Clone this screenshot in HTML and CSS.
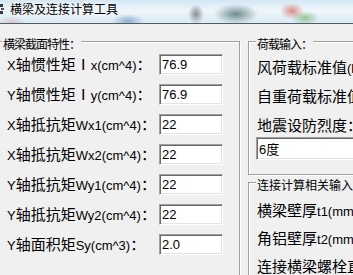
FILE: index.html
```html
<!DOCTYPE html>
<html>
<head>
    <meta charset="utf-8">
    <link rel="stylesheet" href="styles.css">
</head>
<body>
    <div id="titlebar">
        <svg class="app-icon" width="16" height="16" viewBox="0 0 16 16">
            <rect x="11" y="2" width="3" height="3" fill="#3a3a3a"/>
            <rect x="12" y="6" width="3" height="2" fill="#555"/>
            <rect x="11" y="9" width="3" height="3" fill="#3a3a3a"/>
        </svg>
        <span class="title">横梁及连接计算工具</span>
    </div>

    <div id="main">
        <div class="group section-group">
            <div class="group-title">横梁截面特性：</div>
            <div class="rows">
                <div class="row">
                    <span class="label">X<span class="zh">轴惯性矩Ⅰ</span>x(cm^4)<span class="zh">：</span></span>
                    <input class="field" type="text" value="76.9">
                </div>
                <div class="row">
                    <span class="label">Y<span class="zh">轴惯性矩Ⅰ</span>y(cm^4)<span class="zh">：</span></span>
                    <input class="field" type="text" value="76.9">
                </div>
                <div class="row">
                    <span class="label">X<span class="zh">轴抵抗矩</span>Wx1(cm^4)<span class="zh">：</span></span>
                    <input class="field" type="text" value="22">
                </div>
                <div class="row">
                    <span class="label">X<span class="zh">轴抵抗矩</span>Wx2(cm^4)<span class="zh">：</span></span>
                    <input class="field" type="text" value="22">
                </div>
                <div class="row">
                    <span class="label">Y<span class="zh">轴抵抗矩</span>Wy1(cm^4)<span class="zh">：</span></span>
                    <input class="field" type="text" value="22">
                </div>
                <div class="row">
                    <span class="label">Y<span class="zh">轴抵抗矩</span>Wy2(cm^4)<span class="zh">：</span></span>
                    <input class="field" type="text" value="22">
                </div>
                <div class="row">
                    <span class="label">Y<span class="zh">轴面积矩</span>Sy(cm^3)<span class="zh">：</span></span>
                    <input class="field" type="text" value="2.0">
                </div>
            </div>
        </div>

        <div class="side">
            <div class="group load-group">
                <div class="group-title">荷载输入：</div>
                <div class="lines">
                    <div class="line"><span class="zh">风荷载标准值</span>(kN/m^2)<span class="zh">：</span></div>
                    <div class="line"><span class="zh">自重荷载标准值</span>(kN/m)<span class="zh">：</span></div>
                    <div class="line"><span class="zh">地震设防烈度：</span></div>
                </div>
                <input class="field wide" type="text" value="6度">
            </div>

            <div class="group conn-group">
                <div class="group-title">连接计算相关输入：</div>
                <div class="lines">
                    <div class="line"><span class="zh">横梁壁厚</span>t1(mm)<span class="zh">：</span></div>
                    <div class="line"><span class="zh">角铝壁厚</span>t2(mm)<span class="zh">：</span></div>
                    <div class="line"><span class="zh">连接横梁螺栓直径</span>(mm)<span class="zh">：</span></div>
                </div>
            </div>
        </div>
    </div>
</body>
</html>
```

FILE: styles.css
```css
/* Dialog look */
:root {
    --face: #f0f0f0;
    --etch-dark: #a0a0a0;
    --etch-light: #ffffff;
}

body {
    margin: 0;
    background: var(--face);
    font-family: "Liberation Sans", "Noto Sans CJK SC", sans-serif;
    font-size: 13px;
    color: #000;
    overflow: hidden;
}

.zh {
    font-family: "Noto Sans CJK SC", sans-serif;
    font-size: 15px;
}

/* Aero glass title bar, blurred desktop icons behind it */
#titlebar {
    height: 24px;
    display: flex;
    align-items: flex-start;
    padding-top: 2px;
    box-sizing: border-box;
    border-bottom: 1px solid #4f5d6b;
    background:
        radial-gradient(16px 7px at 128px 21px, rgba(80, 125, 175, 0.55), transparent),
        radial-gradient(8px 10px at 196px 14px, rgba(70, 78, 88, 0.6), transparent),
        radial-gradient(22px 10px at 236px 14px, rgba(45, 85, 85, 0.65), transparent),
        radial-gradient(12px 8px at 292px 11px, rgba(205, 70, 60, 0.6), transparent),
        radial-gradient(14px 7px at 305px 18px, rgba(90, 160, 70, 0.55), transparent),
        radial-gradient(14px 6px at 12px 22px, rgba(210, 140, 150, 0.4), transparent),
        linear-gradient(#d3e7f3, #eef6fb 45%, #d9e9f4);
}

.app-icon {
    margin-left: -11px;
    flex: 0 0 auto;
}

.title {
    margin-left: 5px;
    font-family: "Noto Sans CJK SC", sans-serif;
    font-size: 12px;
    line-height: 14px;
    text-shadow: 0 0 6px #fff, 0 0 3px #fff;
}

#main {
    display: flex;
    gap: 8px;
    padding-top: 17px;
}

/* Etched group boxes */
.group {
    border: 1px solid var(--etch-dark);
    box-shadow: inset 1px 1px 0 var(--etch-light), 1px 1px 0 var(--etch-light);
    box-sizing: border-box;
    flex-shrink: 0;
}

.group-title {
    width: max-content;
    margin: -5px 0 0 7px;
    padding: 0 1px;
    background: var(--face);
    font-family: "Noto Sans CJK SC", sans-serif;
    font-size: 12px;
    letter-spacing: -1px;
    line-height: 14px;
}

.section-group {
    width: 246px;
    margin-left: -6px;
    padding-bottom: 16px;
}

.rows {
    display: flex;
    flex-direction: column;
    gap: 9px;
    padding: 3px 0 0 12px;
}

.row {
    display: flex;
    align-items: center;
    height: 21px;
}

.label {
    width: 152px;
    flex: 0 0 auto;
    line-height: 21px;
    white-space: nowrap;
}

.field {
    width: 64px;
    height: 21px;
    box-sizing: border-box;
    margin: 0;
    padding: 0 2px;
    border: 1px solid;
    border-color: #a0a0a0 #fff #fff #a0a0a0;
    box-shadow: inset 1px 1px 0 #696969, inset -1px -1px 0 #e3e3e3;
    background: #fff;
    font-family: "Liberation Sans", "Noto Sans CJK SC", sans-serif;
    font-size: 13px;
    color: #000;
    outline: none;
}

.side {
    display: flex;
    flex-direction: column;
    gap: 7px;
    width: 150px;
    flex-shrink: 0;
}

.lines {
    padding-left: 8px;
    white-space: nowrap;
}

.load-group {
    padding-bottom: 14px;
}

.load-group .lines {
    padding-top: 1px;
}

.load-group .line {
    height: 29px;
    line-height: 29px;
}

.field.wide {
    width: 130px;
    height: 23px;
    margin: -2px 0 0 7px;
    display: block;
}

.conn-group {
    height: 120px;
}

.conn-group .group-title {
    letter-spacing: 0;
}

.conn-group .lines {
    padding-top: 4px;
}

.conn-group .line {
    height: 28px;
    line-height: 28px;
}
```
